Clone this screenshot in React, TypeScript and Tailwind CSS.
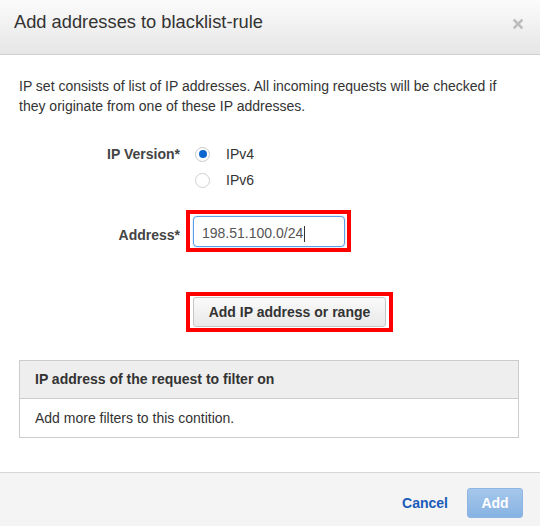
import React from "react";

export default function App() {
  return (
    <div className="w-[540px] h-[526px] bg-white flex flex-col font-['Liberation_Sans',Arial,sans-serif] text-[#333] overflow-hidden">
      {/* Header */}
      <div className="h-[55px] shrink-0 border-b border-[#cfcfcf] bg-gradient-to-b from-[#fbfbfb] to-[#e6e6e6] flex items-start justify-between pl-[14px] pr-[17px]">
        <div className="pt-[10px] text-[18.3px] leading-[24px] text-[#333]">Add addresses to blacklist-rule</div>
        <svg className="mt-[19px]" width="10" height="10" viewBox="0 0 10 10">
          <path d="M1.5 1.5 L8.5 8.5 M8.5 1.5 L1.5 8.5" stroke="#bdbdbd" strokeWidth="2.6" strokeLinecap="square" />
        </svg>
      </div>

      {/* Body */}
      <div className="flex-1 flex flex-col px-[19px] pt-[21px]">
        <p className="text-[14px] leading-[20px] text-[#333]">
          IP set consists of list of IP addresses. All incoming requests will be checked if
          <br />
          they originate from one of these IP addresses.
        </p>

        {/* IP Version */}
        <div className="flex mt-[25px]">
          <div className="w-[161px] text-right font-bold text-[14px] leading-[26px] text-[#444]">IP Version*</div>
          <div className="flex flex-col ml-[15px]">
            <div className="flex items-center h-[26px]">
              <span className="w-[15px] h-[15px] rounded-full border border-[#c9c9c9] bg-white flex items-center justify-center">
                <span className="w-[8px] h-[8px] rounded-full bg-[#0b66cf]" />
              </span>
              <span className="ml-[16px] text-[14px] text-[#333]">IPv4</span>
            </div>
            <div className="flex items-center h-[26px]">
              <span className="w-[15px] h-[15px] rounded-full border border-[#d0d0d0] bg-white" />
              <span className="ml-[16px] text-[14px] text-[#333]">IPv6</span>
            </div>
          </div>
        </div>

        {/* Address */}
        <div className="flex items-center mt-[17px]">
          <div className="w-[161px] text-right font-bold text-[14px] leading-[20px] text-[#444] pt-[8px]">Address*</div>
          <div className="ml-[6px] border-4 border-[#ff0000] pl-[3px] pr-[2px] pt-[2px] pb-[1px]">
            <div className="w-[152px] h-[31px] rounded-[4px] border border-[#5d9fe6] shadow-[0_0_2px_rgba(93,159,230,0.5)] bg-white flex items-center pl-[8px] pt-[4px]">
              <span className="text-[14px] text-[#555]">198.51.100.0/24</span>
              <span className="w-[1px] h-[16px] bg-[#333] ml-[1px]" />
            </div>
          </div>
        </div>

        {/* Add IP button */}
        <div className="flex mt-[40px]">
          <div className="w-[161px]" />
          <div className="ml-[6px] border-4 border-[#ff0000] px-[3px] py-[1px]">
            <button className="w-[193px] h-[30px] rounded-[3px] border border-[#c6c6c6] bg-gradient-to-b from-[#fafafa] to-[#e9e9e9] font-bold text-[14px] text-[#333] flex items-center justify-center">
              Add IP address or range
            </button>
          </div>
        </div>

        {/* Table */}
        <div className="mt-[28px] w-[500px] border border-[#cccccc]">
          <div className="h-[38px] bg-[#eeeeee] border-b border-[#cccccc] flex items-center pl-[15px] font-bold text-[14px] text-[#333]">
            IP address of the request to filter on
          </div>
          <div className="h-[38px] flex items-center pl-[15px] text-[14px] text-[#333]">
            Add more filters to this contition.
          </div>
        </div>
      </div>

      {/* Footer */}
      <div className="h-[54px] shrink-0 border-t border-[#d6d6d6] bg-[#f4f4f4] flex items-start justify-end pr-[17px] pt-[15px]">
        <span className="h-[30px] flex items-center font-bold text-[14px] text-[#1a5bb8] mr-[19px]">Cancel</span>
        <button className="w-[56px] h-[30px] rounded-[3px] border border-[#8db5e3] bg-gradient-to-b from-[#a6c7eb] to-[#86b3e2] text-white font-bold text-[14px] flex items-center justify-center">
          Add
        </button>
      </div>
    </div>
  );
}
